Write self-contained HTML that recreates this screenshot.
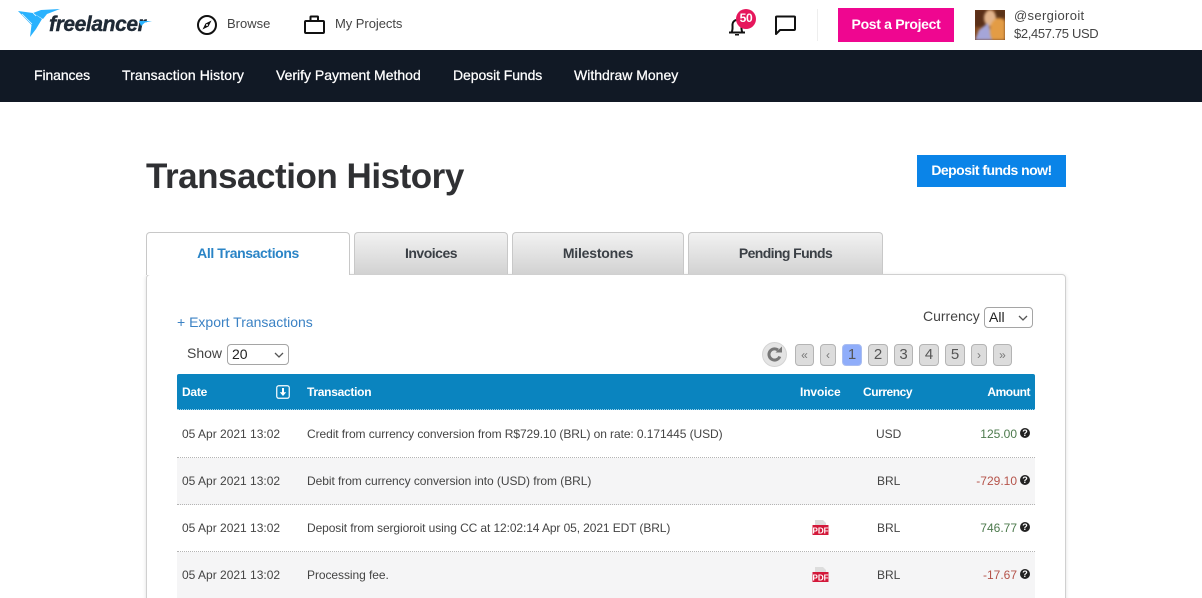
<!DOCTYPE html>
<html><head><meta charset="utf-8"><title>Transaction History</title>
<style>
html,body{margin:0;padding:0;width:1202px;height:598px;overflow:hidden;background:#fff;font-family:"Liberation Sans",sans-serif;color:#333}
#wrap{position:relative;width:1202px;height:598px;overflow:hidden;background:#fff}
.a{position:absolute;white-space:nowrap}
.nav{font-size:14px;font-weight:400;color:#fff;top:67px;line-height:16px;-webkit-text-stroke:.25px #fff}
.tab{position:absolute;top:232px;height:42px;box-sizing:border-box;border:1px solid #c8c8c8;border-bottom:0;border-radius:4px 4px 0 0;background:linear-gradient(#f2f2f2,#d2d2d2);text-align:center;font-weight:700;font-size:14px;line-height:41px;color:#3a3f45}
.pg{position:absolute;top:344px;height:22px;box-sizing:border-box;border:1px solid #b4b4b4;border-radius:4px;background:#dcdcdc;text-align:center;font-size:15px;line-height:20px;color:#555}
.th{position:absolute;top:385px;font-size:12px;font-weight:700;color:#fff;line-height:14px;white-space:nowrap}
.row{position:absolute;left:177px;width:858px;height:47px;box-sizing:border-box;border-bottom:1px dotted #b4b4b4}
.t{position:absolute;font-size:12px;line-height:14px;color:#444;white-space:nowrap}
.q{position:absolute;left:1020px;width:10px;height:10px;border-radius:50%;background:#222;color:#fff;font-size:9px;font-weight:700;line-height:10px;text-align:center}
.sel{position:absolute;box-sizing:border-box;border:1px solid #a5a5a5;border-radius:4px;background:#fff;height:21px;font-size:14px;line-height:19px;color:#222;padding-left:4px}
.sel svg{position:absolute;right:4px;top:7px}
</style></head><body>
<div id="wrap">

<!-- logo -->
<svg class="a" style="left:18px;top:9px" width="44" height="30" viewBox="0 0 44 30">
<path d="M0 2 L15 4 L24 10 L18 20 L12 28 L13.5 16 Z" fill="#29b2fe"/>
<path d="M15 4 L23 1 L42 0 L29 5 L25 10 Z" fill="#29b2fe"/>
<path d="M4 5 L14 15 M15 4 L18 7" stroke="#fff" stroke-width=".7" fill="none"/>
</svg>
<div class="a" style="left:49px;top:13px;font-size:21px;font-weight:700;font-style:italic;color:#1f2a36;letter-spacing:-.4px;line-height:24px;-webkit-text-stroke:.4px #1f2a36">freelancer</div>
<svg class="a" style="left:137px;top:20px" width="15" height="6" viewBox="0 0 15 6"><path d="M2 1H15L8 2.500 4 6Z" fill="#29b2fe"/></svg>

<!-- browse -->
<svg class="a" style="left:196px;top:14px" width="22" height="22" viewBox="0 0 22 22"><circle cx="11" cy="11" r="9" fill="none" stroke="#111" stroke-width="2"/><path d="M15.500 6.500 L12.500 12.500 L6.500 15.500 L9.500 9.500Z" fill="#111"/><circle cx="11" cy="11" r="1" fill="#fff"/></svg>
<div class="a" style="left:227px;top:16px;font-size:13px;line-height:16px;color:#444">Browse</div>
<svg class="a" style="left:303px;top:14px" width="22" height="21" viewBox="0 0 22 21"><rect x="2" y="7" width="19" height="12" rx="1" fill="none" stroke="#111" stroke-width="2"/><path d="M7.500 7V3Q7.500 2.500 8 2.500H14.500Q15 2.500 15 3V7" fill="none" stroke="#111" stroke-width="2"/></svg>
<div class="a" style="left:335px;top:16px;font-size:13px;line-height:16px;color:#444;letter-spacing:-.05px">My Projects</div>

<!-- bell -->
<svg class="a" style="left:727px;top:15px" width="22" height="22" viewBox="0 0 22 22"><path d="M2 17.500H18M4.500 17.500C6 15 5.500 12 5.500 10C5.500 7 7.500 5 10 5S14.500 7 14.500 10C14.500 12 14 15 15.500 17.500" fill="none" stroke="#111" stroke-width="2"/><path d="M8 19H12V20.500H8Z" fill="#111"/></svg>
<div class="a" style="left:736px;top:9px;width:20px;height:20px;border-radius:50%;background:#e6175c;color:#fff;font-size:12px;font-weight:700;line-height:19px;text-align:center;letter-spacing:-.3px">50</div>
<svg class="a" style="left:774px;top:14px" width="22" height="22" viewBox="0 0 22 22"><path d="M2 3Q2 2.500 3 2.500H20Q21 2.500 21 3V15Q21 16 20 16H6L2 20Z" fill="none" stroke="#111" stroke-width="2" stroke-linejoin="round"/></svg>
<div class="a" style="left:817px;top:9px;width:1px;height:32px;background:#eee"></div>
<div class="a" style="left:838px;top:8px;width:116px;height:34px;background:#ef0690;color:#fff;font-size:14px;font-weight:700;line-height:33px;text-align:center;letter-spacing:-.32px">Post a Project</div>

<!-- avatar -->
<div class="a" style="left:975px;top:10px;width:30px;height:30px;overflow:hidden;background:#6b3a1c">
<svg width="30" height="30" viewBox="0 0 30 30" style="display:block;filter:blur(1.2px)"><rect width="30" height="30" fill="#8a4e22"/><rect x="0" width="12" height="17" fill="#5a2f18"/><rect x="20" y="0" width="10" height="8" fill="#5a3318"/><ellipse cx="15" cy="8" rx="6" ry="8" fill="#e2b48c"/><path d="M0 30 L4 20 L13 13 L18 30Z" fill="#a5a5d8"/><ellipse cx="24" cy="21" rx="9" ry="13" fill="#e39c45"/></svg></div>
<div class="a" style="left:1014px;top:8px;font-size:13px;line-height:15px;color:#444;letter-spacing:.35px">@sergioroit</div>
<div class="a" style="left:1014px;top:26px;font-size:13px;line-height:15px;color:#444;letter-spacing:-.35px">$2,457.75 USD</div>

<!-- nav -->
<div class="a" style="left:0;top:50px;width:1202px;height:52px;background:#111925"></div>
<div class="a nav" style="left:34px;letter-spacing:-.1px">Finances</div>
<div class="a nav" style="left:122px;letter-spacing:.1px">Transaction History</div>
<div class="a nav" style="left:276px">Verify Payment Method</div>
<div class="a nav" style="left:453px;letter-spacing:-.08px">Deposit Funds</div>
<div class="a nav" style="left:574px">Withdraw Money</div>

<!-- title -->
<div class="a" style="left:146px;top:155px;font-size:35px;font-weight:700;line-height:44px;color:#2f3033;letter-spacing:-.47px">Transaction History</div>
<div class="a" style="left:917px;top:155px;width:149px;height:32px;background:#0a84e8;color:#fff;font-size:14px;font-weight:700;line-height:31px;text-align:center;letter-spacing:-.53px">Deposit funds now!</div>

<!-- panel -->
<div class="a" style="left:146px;top:274px;width:920px;height:340px;box-sizing:border-box;border:1px solid #d0d0d0;border-radius:4px;background:#fff;box-shadow:0 1px 4px rgba(0,0,0,.12)"></div>

<!-- tabs -->
<div class="tab" style="left:146px;width:204px;height:43px;background:#fff;color:#2a84c6;z-index:2;letter-spacing:-.4px">All Transactions</div>
<div class="tab" style="left:354px;width:154px;letter-spacing:-.5px">Invoices</div>
<div class="tab" style="left:512px;width:172px;letter-spacing:-.2px">Milestones</div>
<div class="tab" style="left:688px;width:195px;letter-spacing:-.6px">Pending Funds</div>

<!-- controls -->
<div class="a" style="left:177px;top:314px;font-size:14px;line-height:17px;color:#3b82c4">+ Export Transactions</div>
<div class="a" style="left:923px;top:308px;font-size:14px;line-height:17px;color:#444">Currency</div>
<div class="sel" style="left:984px;top:307px;width:49px">All<svg width="10" height="6" viewBox="0 0 10 6"><path d="M1 1L5 5 9 1" fill="none" stroke="#555" stroke-width="1.3"/></svg></div>
<div class="a" style="left:187px;top:345px;font-size:14px;line-height:17px;color:#444">Show</div>
<div class="sel" style="left:227px;top:344px;width:62px">20<svg width="10" height="6" viewBox="0 0 10 6"><path d="M1 1L5 5 9 1" fill="none" stroke="#555" stroke-width="1.3"/></svg></div>

<!-- pagination -->
<svg class="a" style="left:762px;top:342px" width="25" height="25" viewBox="0 0 25 25"><circle cx="12.500" cy="12.500" r="12" fill="#e4e4e4" stroke="#d4d4d4"/><path d="M17.800 14.500A5.600 5.600 0 1 1 16 8" fill="none" stroke="#777" stroke-width="3"/><path d="M13.500 10.500H20V4.500Z" fill="#777"/></svg>
<div class="pg" style="left:795px;width:19px;font-size:12px;color:#777">«</div>
<div class="pg" style="left:820px;width:16px;font-size:12px;color:#777">‹</div>
<div class="pg" style="left:842px;width:20px;background:#8fadfa;border-color:#a9bdf0">1</div>
<div class="pg" style="left:868px;width:20px">2</div>
<div class="pg" style="left:894px;width:19px">3</div>
<div class="pg" style="left:919px;width:20px">4</div>
<div class="pg" style="left:945px;width:20px">5</div>
<div class="pg" style="left:971px;width:16px;font-size:12px;color:#777">›</div>
<div class="pg" style="left:993px;width:19px;font-size:12px;color:#777">»</div>

<!-- table header -->
<div class="a" style="left:177px;top:374px;width:858px;height:36px;background:#0a84bf;border-radius:2px 2px 0 0;border-bottom:1px dotted #9fd3ea;box-sizing:border-box"></div>
<div class="th" style="left:182px;letter-spacing:-.25px">Date</div>
<svg class="a" style="left:276px;top:385px" width="14" height="14" viewBox="0 0 14 14"><rect x=".75" y=".75" width="12.500" height="12.500" rx="2" fill="none" stroke="#fff" stroke-width="1.2"/><path d="M7 3V8" stroke="#fff" stroke-width="2"/><path d="M3.800 7.200H10.200L7 11Z" fill="#fff"/></svg>
<div class="th" style="left:307px;letter-spacing:-.28px">Transaction</div>
<div class="th" style="left:800px;letter-spacing:-.12px">Invoice</div>
<div class="th" style="left:863px;letter-spacing:-.45px">Currency</div>
<div class="th" style="right:172px;letter-spacing:-.45px">Amount</div>

<!-- rows -->
<div class="row" style="top:411px"></div>
<div class="row" style="top:458px;background:#f5f5f6"></div>
<div class="row" style="top:505px"></div>
<div class="row" style="top:552px;background:#f5f5f6;border-bottom:0"></div>

<div class="t" style="left:182px;top:427px">05 Apr 2021 13:02</div>
<div class="t" style="left:307px;top:427px;letter-spacing:-.08px">Credit from currency conversion from R$729.10 (BRL) on rate: 0.171445 (USD)</div>
<div class="t" style="left:876px;top:427px">USD</div>
<div class="t" style="right:185px;top:427px;color:#4d7a4d">125.00</div>
<div class="q" style="top:428px">?</div>

<div class="t" style="left:182px;top:474px">05 Apr 2021 13:02</div>
<div class="t" style="left:307px;top:474px;letter-spacing:-.06px">Debit from currency conversion into (USD) from (BRL)</div>
<div class="t" style="left:877px;top:474px">BRL</div>
<div class="t" style="right:185px;top:474px;color:#b5534a">-729.10</div>
<div class="q" style="top:475px">?</div>

<div class="t" style="left:182px;top:521px">05 Apr 2021 13:02</div>
<div class="t" style="left:307px;top:521px;letter-spacing:-.1px">Deposit from sergioroit using CC at 12:02:14 Apr 05, 2021 EDT (BRL)</div>
<div class="t" style="left:877px;top:521px">BRL</div>
<div class="t" style="right:185px;top:521px;color:#4d7a4d">746.77</div>
<div class="q" style="top:522px">?</div>

<div class="t" style="left:182px;top:568px">05 Apr 2021 13:02</div>
<div class="t" style="left:307px;top:568px;letter-spacing:-.06px">Processing fee.</div>
<div class="t" style="left:877px;top:568px">BRL</div>
<div class="t" style="right:185px;top:568px;color:#b5534a">-17.67</div>
<div class="q" style="top:569px">?</div>

<svg class="a" style="left:812px;top:520px" width="17" height="16" viewBox="0 0 17 16"><path d="M3 0H11L14 3V7H3Z" fill="#ddd"/><rect x="0.500" y="5" width="16" height="10" fill="#d3183a"/><text x="8.500" y="13.300" font-family="Liberation Sans" font-size="8" font-weight="700" fill="#fff" text-anchor="middle">PDF</text></svg>
<svg class="a" style="left:812px;top:567px" width="17" height="16" viewBox="0 0 17 16"><path d="M3 0H11L14 3V7H3Z" fill="#ddd"/><rect x="0.500" y="5" width="16" height="10" fill="#d3183a"/><text x="8.500" y="13.300" font-family="Liberation Sans" font-size="8" font-weight="700" fill="#fff" text-anchor="middle">PDF</text></svg>

</div>
</body></html>
